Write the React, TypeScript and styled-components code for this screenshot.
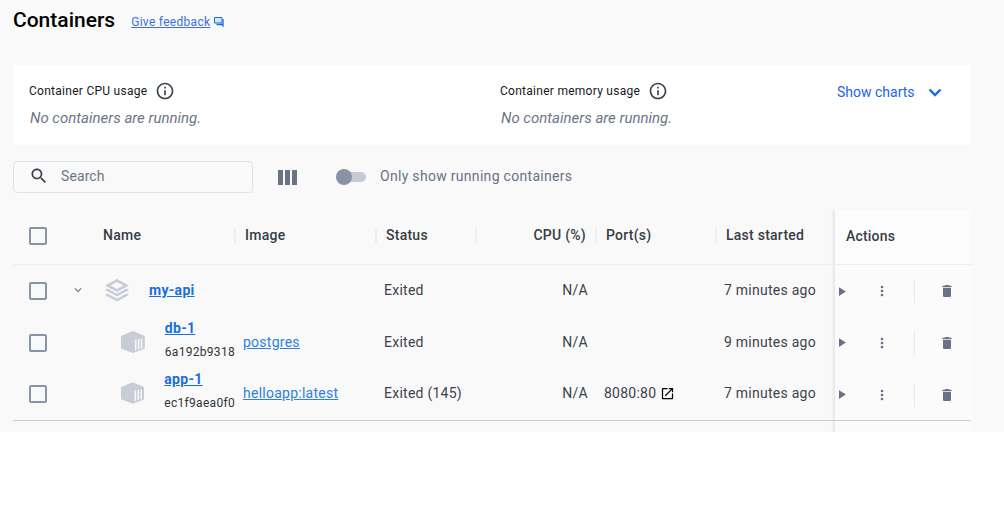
import styled, { createGlobalStyle } from 'styled-components'

const GlobalStyle = createGlobalStyle`
  html, body {
    margin: 0;
    padding: 0;
    background: #ffffff;
  }
  body {
    font-family: Roboto, "Liberation Sans", sans-serif;
  }
`

const colors = {
  page: '#f9f9f9',
  text: '#383d45',
  muted: '#6c7686',
  slate: '#677285',
  check: '#8993a8',
  link: '#1a6fd8',
  blue: '#1d63ed',
  line: '#eceef0',
}

const Page = styled.div`
  height: 432px;
  overflow: hidden;
  box-sizing: border-box;
  padding: 0 33px 0 13px;
  background: ${colors.page};
`

const TitleRow = styled.div`
  display: flex;
  align-items: center;
  gap: 16px;
  height: 40px;
  margin-bottom: 25px;
`

const Title = styled.h1`
  margin: 0;
  font-size: 21px;
  font-weight: 500;
  color: #000;
`

const Feedback = styled.a`
  display: flex;
  align-items: center;
  gap: 4px;
  margin-top: 3px;
  font-size: 12px;
  letter-spacing: 0.3px;
  color: #3f6fe0;
  text-decoration: underline;
`

const StatsCard = styled.section`
  display: flex;
  box-sizing: border-box;
  height: 80px;
  padding: 15px 0 0 16px;
  background: #fff;
`

const Stat = styled.div<{ $width: number }>`
  width: ${(props) => props.$width}px;
`

const StatLabel = styled.div`
  display: flex;
  align-items: center;
  gap: 8px;
  height: 21px;
  font-size: 12px;
  letter-spacing: 0.27px;
  color: #17191d;
`

const StatEmpty = styled.div`
  margin-top: 8px;
  padding-left: 1px;
  font-size: 15px;
  font-style: italic;
  color: ${colors.muted};
`

const ChartsButton = styled.button`
  display: flex;
  align-items: center;
  gap: 8px;
  height: 24px;
  padding: 0;
  border: none;
  background: transparent;
  font-family: inherit;
  font-size: 14px;
  color: ${colors.blue};
`

const Toolbar = styled.div`
  display: flex;
  align-items: center;
  height: 32px;
  margin: 16px 0 17px;
`

const SearchBox = styled.div`
  display: flex;
  align-items: center;
  gap: 12px;
  box-sizing: border-box;
  width: 240px;
  height: 32px;
  padding: 0 0 2px 15px;
  border: 1px solid #e1e2e6;
  border-radius: 4px;
  font-size: 14px;
  letter-spacing: 0.1px;
  color: ${colors.muted};
`

const ColumnsButton = styled.span`
  display: flex;
  margin: 0 39px 0 25px;
`

const Toggle = styled.span`
  display: flex;
  align-items: center;
  box-sizing: border-box;
  width: 30px;
  height: 10px;
  margin-right: 14px;
  border-radius: 5px;
  background: #c6cad3;
`

const ToggleKnob = styled.span`
  width: 16px;
  height: 16px;
  border-radius: 50%;
  background: ${colors.check};
`

const ToggleLabel = styled.span`
  padding-bottom: 2px;
  font-size: 14px;
  color: ${colors.slate};
  letter-spacing: 0.3px;
`

const gridColumns = '222px 141px 100px 120px 120px 119px 136px'

const HeaderRow = styled.div`
  display: grid;
  grid-template-columns: ${gridColumns};
  height: 54.5px;
  box-sizing: border-box;
  border-bottom: 1px solid ${colors.line};
`

const HeaderCell = styled.div<{ $end?: boolean }>`
  display: flex;
  align-items: center;
  justify-content: ${(props) => (props.$end ? 'space-between' : 'flex-start')};
  padding: ${(props) => (props.$end ? '0 10px 3px 0' : '0 0 3px')};
  font-size: 14px;
  font-weight: 500;
  letter-spacing: 0.25px;
  color: ${colors.text};
`

const Divider = styled.span`
  flex: none;
  width: 2px;
  height: 15px;
  margin: 0 9px 0 -1px;
  background: #efefef;
`

const Row = styled.div<{ $last?: boolean }>`
  display: grid;
  grid-template-columns: ${gridColumns};
  height: ${(props) => (props.$last ? '52px' : '51.5px')};
  border-bottom: ${(props) => (props.$last ? '1px solid #c7cbd6' : 'none')};

  ${(props) =>
    props.$last &&
    `
    & > *:not(:last-child) {
      height: 51px;
    }
  `}
`

const Filler = styled.div`
  display: grid;
  grid-template-columns: ${gridColumns};
  height: 12px;
`

const Cell = styled.div<{ $end?: boolean }>`
  display: flex;
  align-items: center;
  justify-content: ${(props) => (props.$end ? 'flex-end' : 'flex-start')};
  padding: ${(props) => (props.$end ? '0 8px 0 0' : '0 0 0 8px')};
  font-size: 14px;
  letter-spacing: 0.25px;
  color: #3d434c;
`

const NameCell = styled.div`
  display: flex;
  align-items: center;
  padding-left: 16px;
`

const NameHeaderCell = styled(NameCell)`
  padding-bottom: 1px;
  font-size: 14px;
  font-weight: 500;
  letter-spacing: 0.25px;
  color: ${colors.text};
`

const NameHeaderLabel = styled.span`
  padding-bottom: 2px;
`

const Checkbox = styled.span<{ $gap?: number; $low?: boolean }>`
  flex: none;
  box-sizing: border-box;
  width: 18px;
  height: 18px;
  margin-top: ${(props) => (props.$low ? '2px' : '0')};
  margin-right: ${(props) => props.$gap ?? 0}px;
  border: 2px solid ${colors.check};
  border-radius: 2px;
`

const Expander = styled.span`
  display: flex;
  margin: 0 18px 0 24px;
`

const NameLink = styled.a<{ $gap?: number }>`
  margin-left: ${(props) => props.$gap ?? 0}px;
  font-size: 14px;
  font-weight: 700;
  letter-spacing: 0.3px;
  color: ${colors.link};
  text-decoration: underline;
`

const NameStack = styled.div`
  display: flex;
  flex-direction: column;
  gap: 9px;
  margin: 0 0 5px 20px;
`

const ContainerId = styled.span`
  font-size: 12px;
  letter-spacing: 0.3px;
  color: #30343a;
`

const ImageLink = styled.a`
  color: #2e7fe0;
  text-decoration: underline;
`

const PortValue = styled.span`
  display: flex;
  align-items: center;
  gap: 4px;
`

const ActionsHeader = styled.div`
  position: relative;
  display: flex;
  align-items: center;
  padding: 0 0 1px 11px;
  font-size: 14px;
  font-weight: 500;
  letter-spacing: 0.2px;
  color: ${colors.text};
  background: #fcfcfc;

  &::before {
    content: '';
    position: absolute;
    top: 0;
    bottom: 0;
    left: -4px;
    width: 4px;
    background: linear-gradient(to right, rgba(0, 0, 0, 0), rgba(0, 0, 0, 0.08));
  }
`

const ActionsCell = styled.div`
  position: relative;
  display: flex;
  align-items: center;
  padding-top: 2px;
  background: #fbfbfb;

  &::before {
    content: '';
    position: absolute;
    top: 0;
    bottom: 0;
    left: -4px;
    width: 4px;
    background: linear-gradient(to right, rgba(0, 0, 0, 0), rgba(0, 0, 0, 0.08));
  }
`

const PlayIcon = styled.span`
  display: flex;
  margin: 0 25px 0 -1px;
`

const MoreIcon = styled.span`
  display: flex;
  margin-right: 24px;
`

const ActionDivider = styled.span`
  width: 1px;
  height: 24px;
  margin-right: 24px;
  background: #e8e9ec;
`

const Glyph = ({ d, size, color }: { d: string; size: number; color: string }) => (
  <svg width={size} height={size} viewBox="0 0 24 24" fill={color}>
    <path d={d} />
  </svg>
)

const INFO = 'M11 7h2v2h-2zm0 4h2v6h-2zm1-9C6.48 2 2 6.48 2 12s4.48 10 10 10 10-4.48 10-10S17.52 2 12 2zm0 18c-4.41 0-8-3.59-8-8s3.59-8 8-8 8 3.59 8 8-3.59 8-8 8z'
const SEARCH = 'M15.5 14h-.79l-.28-.27C15.41 12.59 16 11.11 16 9.5 16 5.91 13.09 3 9.5 3S3 5.91 3 9.5 5.91 16 9.5 16c1.61 0 3.09-.59 4.23-1.57l.27.28v.79l5 4.99L20.49 19l-4.99-5zm-6 0C7.01 14 5 11.99 5 9.5S7.01 5 9.5 5 14 7.01 14 9.5 11.99 14 9.5 14z'
const EXPAND = 'M16.59 8.59L12 13.17 7.41 8.59 6 10l6 6 6-6z'
const TRASH = 'M6 19c0 1.1.9 2 2 2h8c1.1 0 2-.9 2-2V7H6v12zM19 4h-3.5l-1-1h-5l-1 1H5v2h14V4z'
const MORE = 'M12 8c1.1 0 2-.9 2-2s-.9-2-2-2-2 .9-2 2 .9 2 2 2zm0 2c-1.1 0-2 .9-2 2s.9 2 2 2 2-.9 2-2-.9-2-2-2zm0 6c-1.1 0-2 .9-2 2s.9 2 2 2 2-.9 2-2-.9-2-2-2z'
const OPEN = 'M19 19H5V5h7V3H5c-1.11 0-2 .9-2 2v14c0 1.1.89 2 2 2h14c1.1 0 2-.9 2-2v-7h-2v7zM14 3v2h3.59l-9.83 9.83 1.41 1.41L19 6.41V10h2V3h-7z'

const ChartsChevron = () => (
  <svg width="24" height="24" viewBox="0 0 24 24" fill="none" stroke={colors.blue} strokeWidth="2.4">
    <path d="M6.500 9.500 12 15l5.500-5.500" />
  </svg>
)

const FeedbackIcon = () => (
  <svg width="10" height="10" viewBox="0 0 10 10">
    <path d="M.5.5h7.500v5.500H.5z" fill="#d5e4f8" stroke="#1d6fd8" />
    <path d="M9 2v6.800L7.800 7.500H2.500" fill="none" stroke="#1d6fd8" strokeWidth="1.300" />
  </svg>
)

const ColumnsIcon = () => (
  <svg width="19" height="15" viewBox="0 0 19 15" fill={colors.slate}>
    <rect x="0" y="0" width="5" height="15" />
    <rect x="7" y="0" width="5" height="15" />
    <rect x="14" y="0" width="5" height="15" />
  </svg>
)

const StackIcon = () => (
  <svg width="28" height="24" viewBox="0 0 28 24" fill="#c8ccd6">
    <path d="M14 1 26 7.500 14 14 2 7.500zM14 4 7.500 7.500 14 11l6.500-3.500z" fillRule="evenodd" />
    <path d="M4.500 10.500 14 15.700l9.500-5.200L26 12 14 18.500 2 12z" />
    <path d="M4.500 15.500 14 20.700l9.500-5.200L26 17 14 23.500 2 17z" />
  </svg>
)

const BoxIcon = () => (
  <svg width="24" height="24" viewBox="0 0 24 24">
    <path d="M12 1 24 6v12.500L12 23 0 18.500V6z" fill="#c8ccd6" />
    <path d="M14 9.500h1.600v10.500L14 20.500zM17 9h1.600v10L17 19.500zM20 8.500h1.600V18.200L20 18.800z" fill="#f9f9f9" />
  </svg>
)

const RowActions = () => (
  <ActionsCell>
    <PlayIcon>
      <Glyph d="M8 5v14l11-7z" size={15} color={colors.slate} />
    </PlayIcon>
    <MoreIcon>
      <Glyph d={MORE} size={16} color={colors.slate} />
    </MoreIcon>
    <ActionDivider />
    <Glyph d={TRASH} size={16} color={colors.slate} />
  </ActionsCell>
)

const children = [
  { name: 'db-1', id: '6a192b9318', image: 'postgres', status: 'Exited', port: '', started: '9 minutes ago' },
  { name: 'app-1', id: 'ec1f9aea0f0', image: 'helloapp:latest', status: 'Exited (145)', port: '8080:80', started: '7 minutes ago' },
]

const App = () => (
  <>
    <GlobalStyle />
    <Page>
      <TitleRow>
        <Title>Containers</Title>
        <Feedback>
          Give feedback
          <FeedbackIcon />
        </Feedback>
      </TitleRow>

      <StatsCard>
        <Stat $width={471}>
          <StatLabel>
            Container CPU usage
            <Glyph d={INFO} size={20} color="#3d434c" />
          </StatLabel>
          <StatEmpty>No containers are running.</StatEmpty>
        </Stat>
        <Stat $width={337}>
          <StatLabel>
            Container memory usage
            <Glyph d={INFO} size={20} color="#3d434c" />
          </StatLabel>
          <StatEmpty>No containers are running.</StatEmpty>
        </Stat>
        <ChartsButton>
          Show charts
          <ChartsChevron />
        </ChartsButton>
      </StatsCard>

      <Toolbar>
        <SearchBox>
          <Glyph d={SEARCH} size={20} color="#3d434c" />
          Search
        </SearchBox>
        <ColumnsButton>
          <ColumnsIcon />
        </ColumnsButton>
        <Toggle>
          <ToggleKnob />
        </Toggle>
        <ToggleLabel>Only show running containers</ToggleLabel>
      </Toolbar>

      <HeaderRow>
        <NameHeaderCell>
          <Checkbox $gap={56} />
          <NameHeaderLabel>Name</NameHeaderLabel>
        </NameHeaderCell>
        <HeaderCell><Divider />Image</HeaderCell>
        <HeaderCell><Divider />Status</HeaderCell>
        <HeaderCell $end><Divider />CPU (%)</HeaderCell>
        <HeaderCell><Divider />Port(s)</HeaderCell>
        <HeaderCell><Divider />Last started</HeaderCell>
        <ActionsHeader>Actions</ActionsHeader>
      </HeaderRow>

      <Row>
        <NameCell>
          <Checkbox $low />
          <Expander>
            <Glyph d={EXPAND} size={14} color={colors.slate} />
          </Expander>
          <StackIcon />
          <NameLink $gap={18}>my-api</NameLink>
        </NameCell>
        <Cell />
        <Cell>Exited</Cell>
        <Cell $end>N/A</Cell>
        <Cell />
        <Cell>7 minutes ago</Cell>
        <RowActions />
      </Row>

      {children.map((item, index) => (
        <Row key={item.name} $last={index === children.length - 1}>
          <NameCell>
            <Checkbox $low $gap={74} />
            <BoxIcon />
            <NameStack>
              <NameLink>{item.name}</NameLink>
              <ContainerId>{item.id}</ContainerId>
            </NameStack>
          </NameCell>
          <Cell><ImageLink>{item.image}</ImageLink></Cell>
          <Cell>{item.status}</Cell>
          <Cell $end>N/A</Cell>
          <Cell>
            {item.port && (
              <PortValue>
                {item.port}
                <Glyph d={OPEN} size={15} color="#000" />
              </PortValue>
            )}
          </Cell>
          <Cell>{item.started}</Cell>
          <RowActions />
        </Row>
      ))}

      <Filler>
        <span /><span /><span /><span /><span /><span />
        <ActionsCell />
      </Filler>
    </Page>
  </>
)

export default App
